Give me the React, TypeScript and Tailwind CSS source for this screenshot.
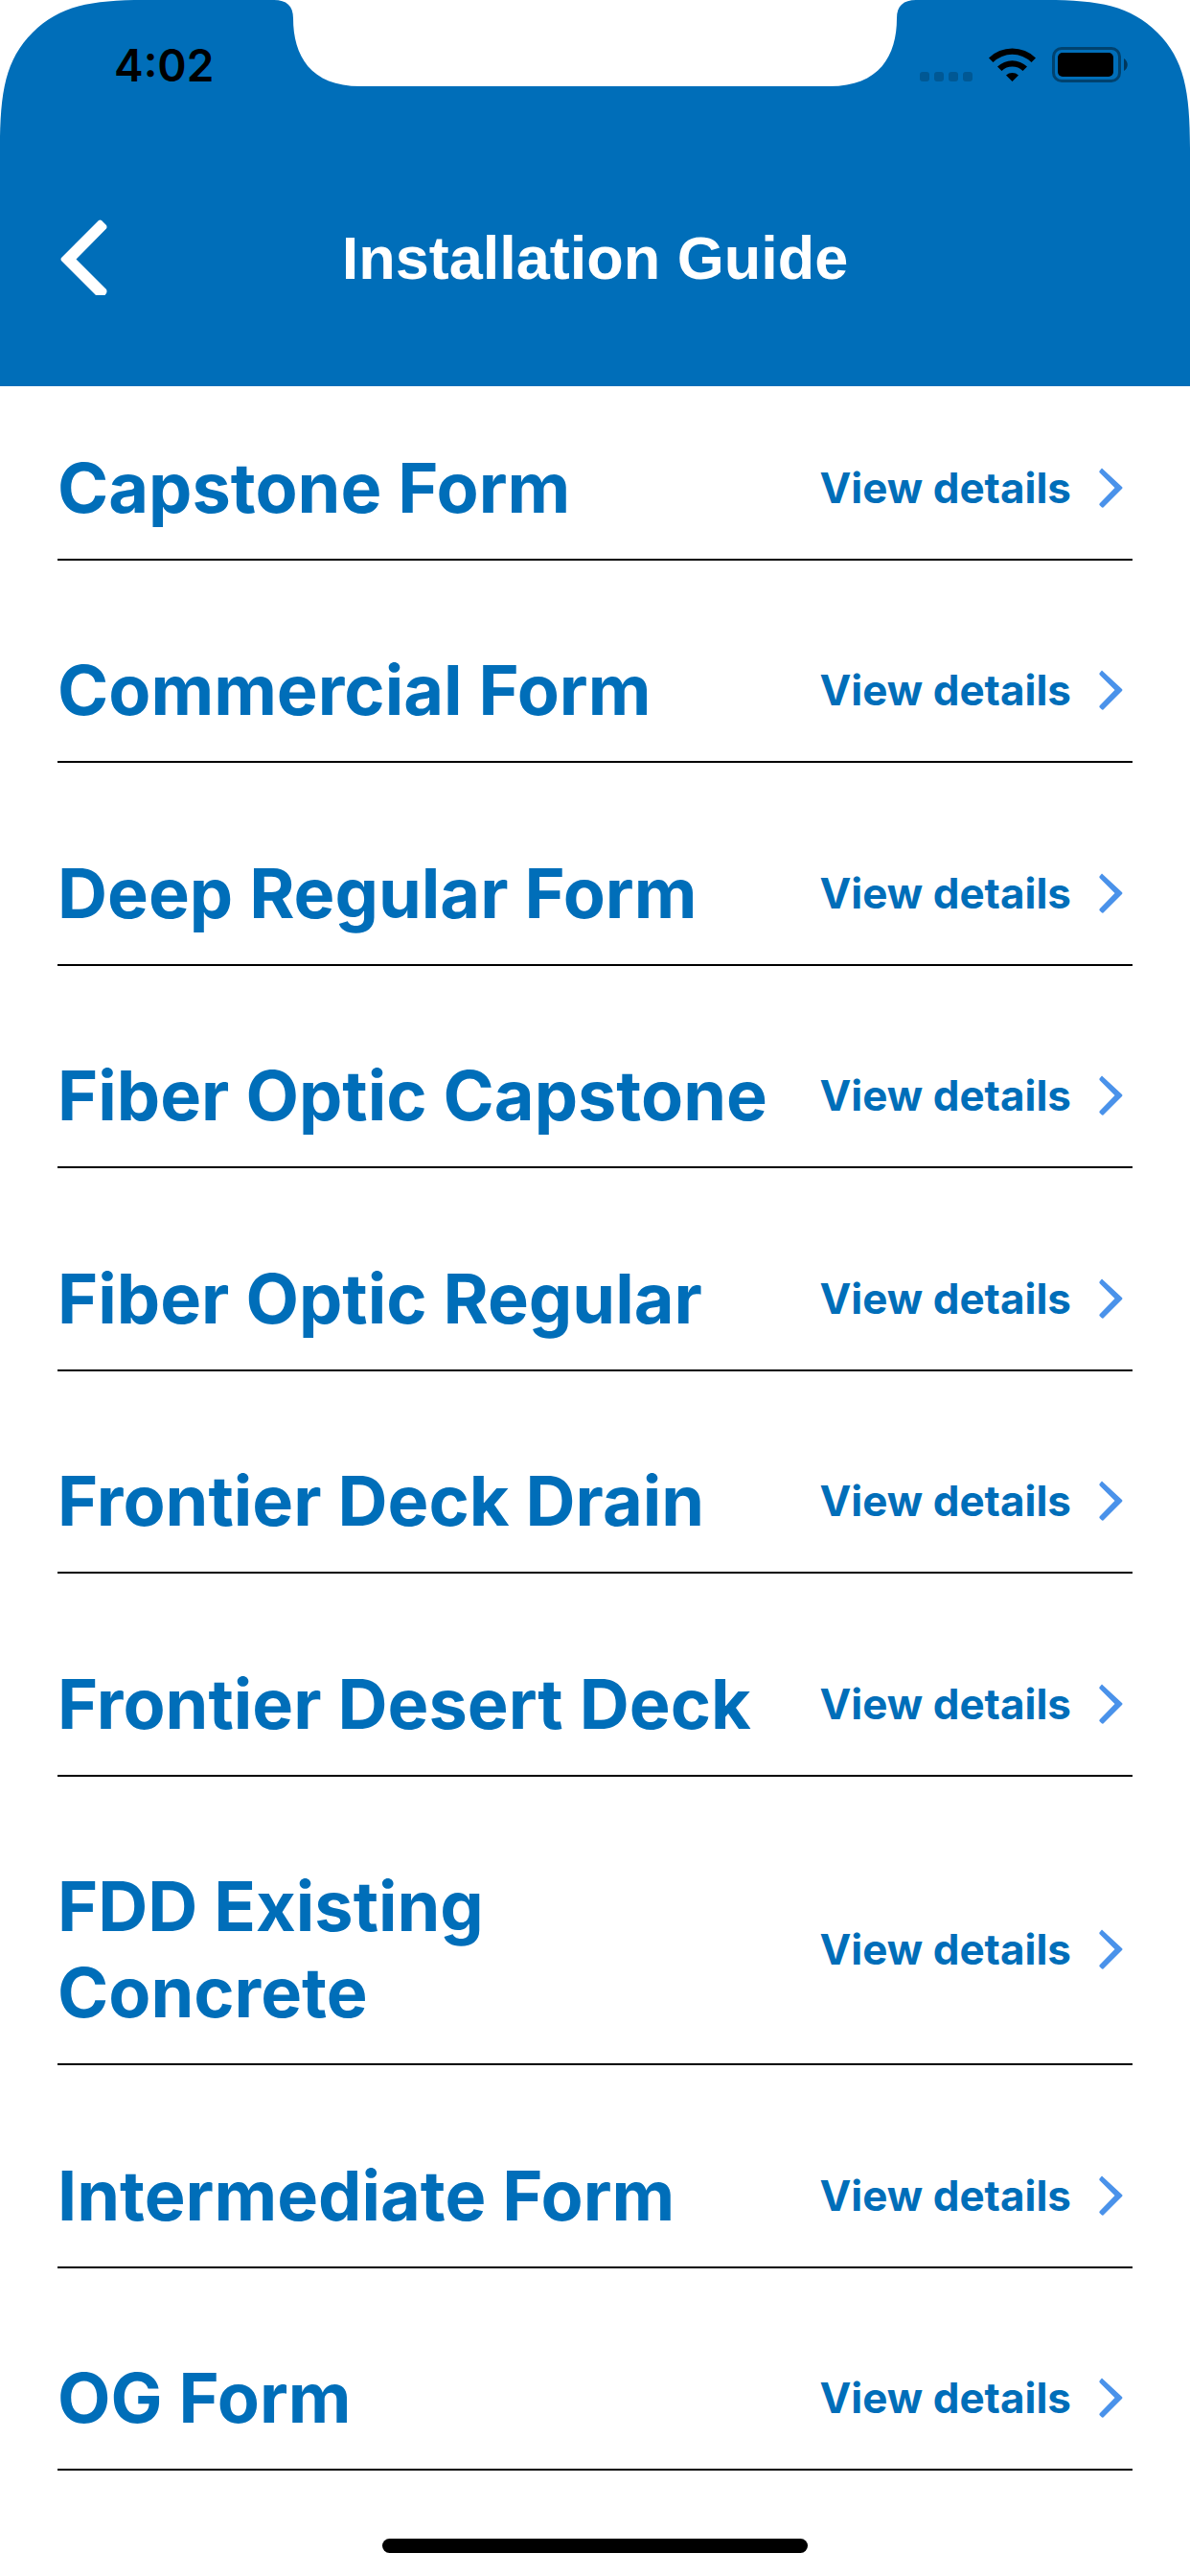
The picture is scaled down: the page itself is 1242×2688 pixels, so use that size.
import React from 'react';

const guides = [
  'Capstone Form',
  'Commercial Form',
  'Deep Regular Form',
  'Fiber Optic Capstone',
  'Fiber Optic Regular',
  'Frontier Deck Drain',
  'Frontier Desert Deck',
  'FDD Existing Concrete',
  'Intermediate Form',
  'OG Form',
];

const ScreenCorner: React.FC<{ className: string }> = ({ className }) => (
  <svg width="156" height="156" viewBox="0 0 156 156" className={className} aria-hidden="true">
    <path d="M0 0H150C95 0 62 6 34 34C6 62 0 95 0 155Z" fill="#fff" />
  </svg>
);

const Notch = () => (
  <svg width="670" height="90" viewBox="0 0 670 90" className="absolute top-0 left-1/2 -translate-x-1/2" aria-hidden="true">
    <path
      d="M0 0C13 0 20 6 20 19C20 58 38 90 90 90H580C632 90 650 58 650 19C650 6 657 0 670 0Z"
      fill="#fff"
    />
  </svg>
);

const StatusIcons = () => (
  <svg width="220" height="38" viewBox="0 0 220 38" aria-hidden="true">
    <g fillOpacity="0.2">
      <rect x="0" y="26" width="10" height="10" rx="3" />
      <rect x="15" y="26" width="10" height="10" rx="3" />
      <rect x="30" y="26" width="10" height="10" rx="3" />
      <rect x="45" y="26" width="10" height="10" rx="3" />
    </g>
    {/* wifi */}
    <path d="M72 11.500A35 35 0 0 1 121 11.500L116.500 16A28.500 28.500 0 0 0 76.500 16Z" />
    <path d="M81 20.500A22.500 22.500 0 0 1 112 20.500L107.500 25A16 16 0 0 0 85.500 25Z" />
    <path d="M90 29.500A10 10 0 0 1 103 29.500L96.500 36Z" />
    {/* battery */}
    <rect x="139.500" y="1.500" width="69" height="34" rx="8.500" fill="none" stroke="#000" strokeOpacity="0.4" strokeWidth="3" />
    <rect x="144" y="6" width="58" height="25" rx="5" />
    <path d="M213 12C218 15 218 22 213 25Z" fillOpacity="0.5" />
  </svg>
);

const BackIcon = () => (
  <svg width="49" height="79" viewBox="0 0 49 79" aria-hidden="true">
    <path
      d="M40 1Q41.500 0 43 1L48 6Q49 8 48 9.500L16.500 41.500L48 73Q49 75 48 77L46.500 79H37L1 43Q0 41.500 1 40Z"
      fill="#fff"
    />
  </svg>
);

const ChevronIcon = () => (
  <svg width="25" height="42" viewBox="0 0 25 42" aria-hidden="true">
    <path
      d="M3 .500L24 20Q25 21 24 22L4.500 41.500Q3.500 42 2.500 41L.500 39Q0 38 1 37L16.500 21L1 5.500Q0 4.500 .500 3.500Z"
      fill="#4a92ea"
    />
  </svg>
);

const GuideRow: React.FC<{ name: string }> = ({ name }) => (
  <li>
    <a href="#" className="flex items-center justify-between gap-4 border-b-2 border-black pt-[61px] pb-[29px] pr-[10px]">
      <span className="max-w-[760px] text-[72px] leading-[90px] font-bold">{name}</span>
      <span className="flex shrink-0 items-center gap-[29px] text-[44px] leading-[54px] font-bold">
        View details
        <ChevronIcon />
      </span>
    </a>
  </li>
);

export default function App() {
  return (
    <div className="flex min-h-screen flex-col bg-white font-['Inter',sans-serif] text-[#006eb9]">
      <header className="relative bg-[#006eb9]">
        <ScreenCorner className="absolute top-0 left-0" />
        <ScreenCorner className="absolute top-0 right-0 -scale-x-100" />
        <Notch />
        <div className="relative flex h-[136px] items-center justify-between pr-[62px] pl-[119px] text-black">
          <time className="text-[46px] leading-[56px] font-semibold">4:02</time>
          <StatusIcons />
        </div>
        <div className="grid grid-cols-[1fr_auto_1fr] items-center px-[63px] pt-[93px] pb-[95px]">
          <button type="button" aria-label="Back" className="justify-self-start">
            <BackIcon />
          </button>
          <h1 className="font-['Liberation_Sans',Arial,sans-serif] text-[63px] leading-[72px] font-bold text-white">
            Installation Guide
          </h1>
        </div>
      </header>

      <main className="flex grow flex-col px-[60px]">
        <ul className="flex grow flex-col justify-between">
          {guides.map((name) => (
            <GuideRow key={name} name={name} />
          ))}
        </ul>
      </main>

      <footer className="flex h-[110px] justify-center pt-[71px]">
        <div className="h-[15px] w-[444px] rounded-full bg-black" />
      </footer>
    </div>
  );
}
